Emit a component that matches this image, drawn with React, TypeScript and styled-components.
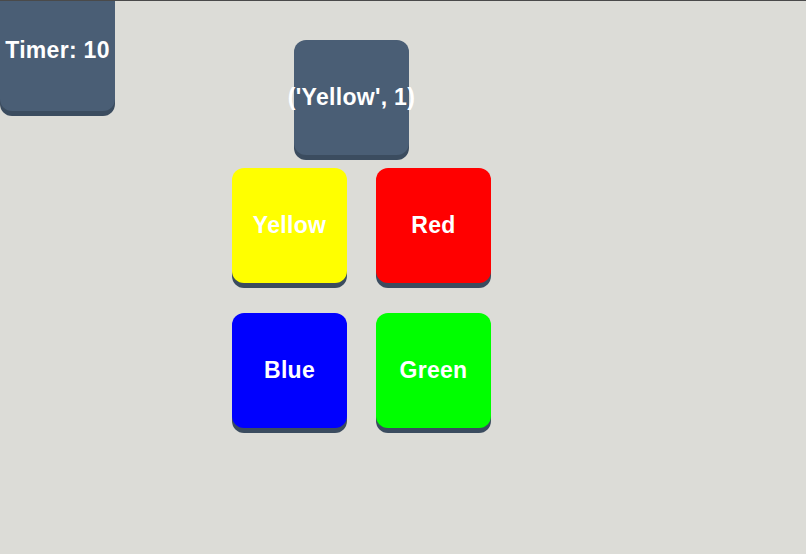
import React from "react";
import styled, { createGlobalStyle } from "styled-components";

const Global = createGlobalStyle`
  html, body { margin: 0; padding: 0; }
  body {
    background: #dcdcd7;
    border-top: 1px solid #4a4a4a;
    height: 553px;
    overflow: hidden;
    font-family: "Liberation Sans", Arial, Helvetica, sans-serif;
  }
`;

const Page = styled.div`
  display: flex;
  align-items: flex-start;
`;

const Tile = styled.div<{ $bg: string }>`
  width: 115px;
  height: 115px;
  flex: none;
  box-sizing: border-box;
  border-radius: 12px;
  background: ${(p) => p.$bg};
  box-shadow: 0 5px 0 #3b4c5f;
  display: flex;
  align-items: center;
  justify-content: center;
  color: #ffffff;
  font-weight: bold;
  font-size: 23px;
  letter-spacing: 0.3px;
  white-space: nowrap;
  overflow: visible;
`;

const TimerTile = styled(Tile)`
  margin-top: -11px;
  height: 121px;
  border-top-left-radius: 0;
  border-top-right-radius: 0;
`;

const Game = styled.div`
  margin-left: 117px;
  padding-top: 39px;
  display: flex;
  flex-direction: column;
  gap: 13px;
`;

const Prompt = styled(Tile)`
  margin-left: 62px;
`;

const Grid = styled.div`
  display: grid;
  grid-template-columns: 115px 115px;
  column-gap: 29px;
  row-gap: 30px;
`;

const colors = [
  { name: "Yellow", bg: "#ffff00" },
  { name: "Red", bg: "#ff0000" },
  { name: "Blue", bg: "#0000ff" },
  { name: "Green", bg: "#00ff00" },
];

export default function App() {
  return (
    <>
      <Global />
      <Page>
        <TimerTile $bg="#4a5e75">Timer: 10</TimerTile>
        <Game>
          <Prompt $bg="#4a5e75">('Yellow', 1)</Prompt>
          <Grid>
            {colors.map((c) => (
              <Tile key={c.name} $bg={c.bg}>
                {c.name}
              </Tile>
            ))}
          </Grid>
        </Game>
      </Page>
    </>
  );
}
